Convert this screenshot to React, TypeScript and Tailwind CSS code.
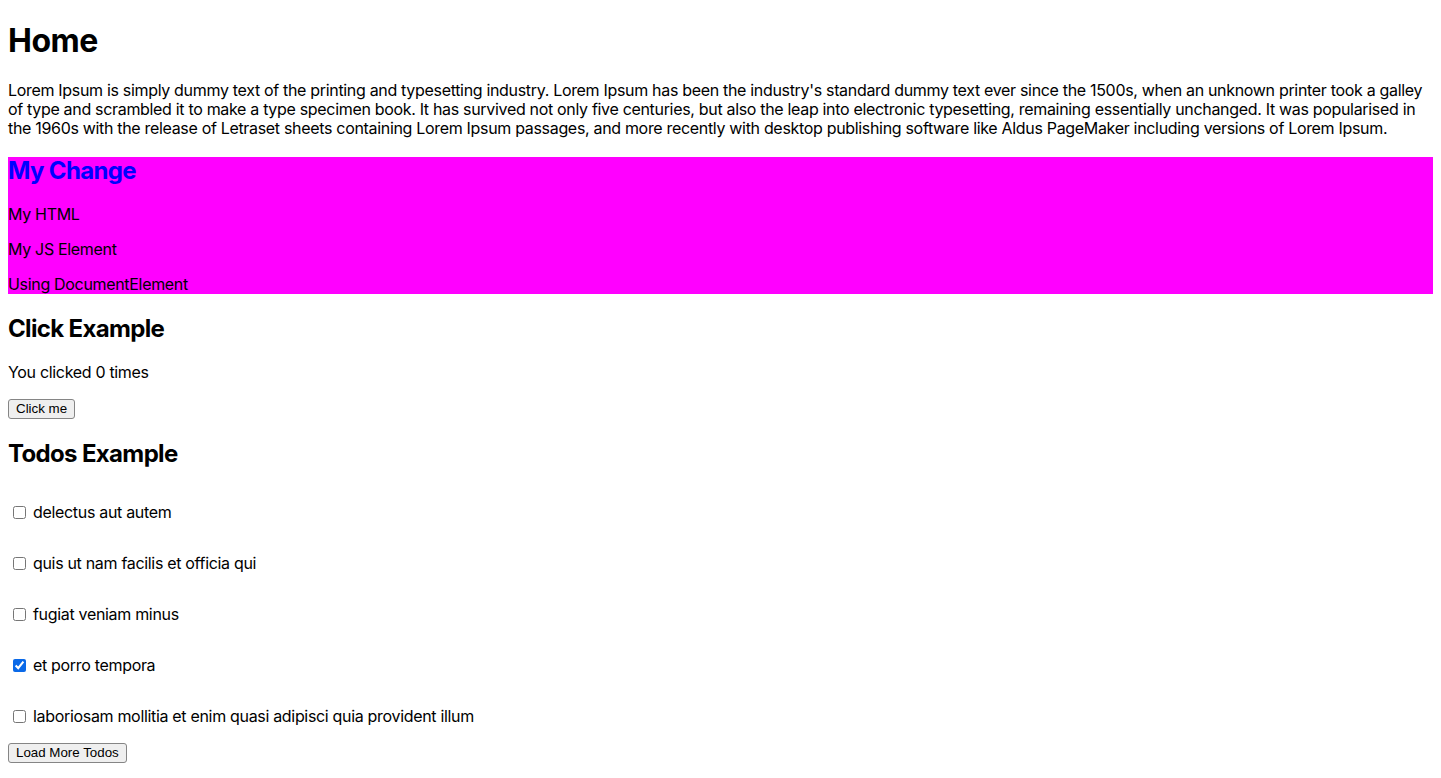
const todos = [
  { title: "delectus aut autem", done: false },
  { title: "quis ut nam facilis et officia qui", done: false },
  { title: "fugiat veniam minus", done: false },
  { title: "et porro tempora", done: true },
  { title: "laboriosam mollitia et enim quasi adipisci quia provident illum", done: false },
];

const btn =
  "bg-[#efefef] border border-[#858585] rounded-[3px] px-[7px] h-5 text-[13.33px] leading-[18px] tracking-normal text-black font-['Liberation_Sans',Arial,sans-serif]";

const h2 = "text-2xl leading-[28px] font-bold tracking-[-0.65px]";

export default function App() {
  return (
    <div className="m-2 font-['Inter',sans-serif] text-base leading-[19px] tracking-[-0.32px] text-black">
      <h1 className="mt-[21px] mb-[21px] text-[32px] leading-[39px] font-bold tracking-[-0.5px]">Home</h1>
      <p>
        Lorem Ipsum is simply dummy text of the printing and typesetting industry. Lorem Ipsum has been the
        industry's standard dummy text ever since the 1500s, when an unknown printer took a galley of type and
        scrambled it to make a type specimen book. It has survived not only five centuries, but also the leap into
        electronic typesetting, remaining essentially unchanged. It was popularised in the 1960s with the release of
        Letraset sheets containing Lorem Ipsum passages, and more recently with desktop publishing software like
        Aldus PageMaker including versions of Lorem Ipsum.
      </p>

      <div className="bg-[#ff00ff] mt-[19px]">
        <h2 className={`${h2} text-[#0000ff]`}>My Change</h2>
        <p className="mt-[20px]">My HTML</p>
        <p className="mt-4">My JS Element</p>
        <p className="mt-4">Using DocumentElement</p>
      </div>

      <h2 className={`mt-[21px] ${h2}`}>Click Example</h2>
      <p className="mt-[20px] mb-4">You clicked 0 times</p>
      <button className={btn}>Click me</button>

      <h2 className={`mt-[21px] mb-[19px] ${h2}`}>Todos Example</h2>
      {todos.map((t) => (
        <div key={t.title} className="flex items-center py-4">
          <input
            type="checkbox"
            defaultChecked={t.done}
            className="w-[13px] h-[13px] ml-[5px] mr-[7px] accent-[#0a69e8]"
          />
          <span>{t.title}</span>
        </div>
      ))}
      <button className={btn}>Load More Todos</button>
    </div>
  );
}
